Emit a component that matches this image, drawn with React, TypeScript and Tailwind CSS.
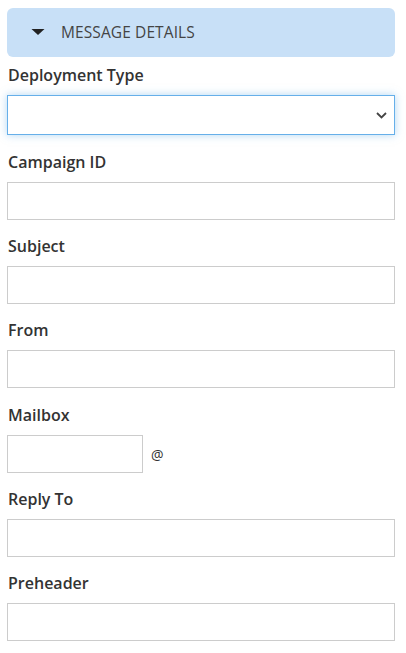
import React from 'react';

const font = { fontFamily: '"Open Sans", "Noto Sans", sans-serif' };

const Field: React.FC<{ label: string; last?: string; children: React.ReactNode }> = ({ label, last = 'mb-[15px]', children }) => (
  <div className={last}>
    <label className="block text-[16px] leading-[22px] font-semibold text-[#333] mb-[9px] pl-px">{label}</label>
    {children}
  </div>
);

const TextInput: React.FC<{ className?: string }> = ({ className = 'w-full' }) => (
  <input type="text" className={`${className} h-[38px] border border-[#ccc] bg-white outline-none`} />
);

export default function App() {
  return (
    <div className="min-h-screen bg-white px-[7px] pt-[8px] w-[402px]" style={font}>
      <div className="h-[49px] rounded-[6px] bg-[#c8e0f7] flex items-center pl-[24px]">
        <svg width="14" height="8" viewBox="0 0 14 8" className="mr-[16px] mt-[-1px]">
          <path d="M0.5 1 L13.5 1 L7 7 Z" fill="#222" />
        </svg>
        <span className="text-[15.5px] text-[#444] uppercase tracking-[0.1px]">Message Details</span>
      </div>

      <div className="mt-[7px]">
        <Field label="Deployment Type" last="mb-[16px]">
          <div className="relative">
            <select className="w-full h-[40px] border border-[#66afe9] bg-white outline-none appearance-none shadow-[0_0_8px_rgba(102,175,233,0.5)]">
              <option></option>
            </select>
            <svg width="11" height="7" viewBox="0 0 11 7" className="absolute right-[8px] top-[17px] pointer-events-none">
              <path d="M1 1 L5.5 5.5 L10 1" fill="none" stroke="#444" strokeWidth="1.8" />
            </svg>
          </div>
        </Field>
        <Field label="Campaign ID"><TextInput /></Field>
        <Field label="Subject"><TextInput /></Field>
        <Field label="From" last="mb-[16px]"><TextInput /></Field>
        <Field label="Mailbox">
          <div className="flex items-center">
            <TextInput className="w-[136px]" />
            <span className="ml-[8px] text-[14px] text-[#333]">@</span>
          </div>
        </Field>
        <Field label="Reply To"><TextInput /></Field>
        <Field label="Preheader"><TextInput /></Field>
      </div>
    </div>
  );
}
